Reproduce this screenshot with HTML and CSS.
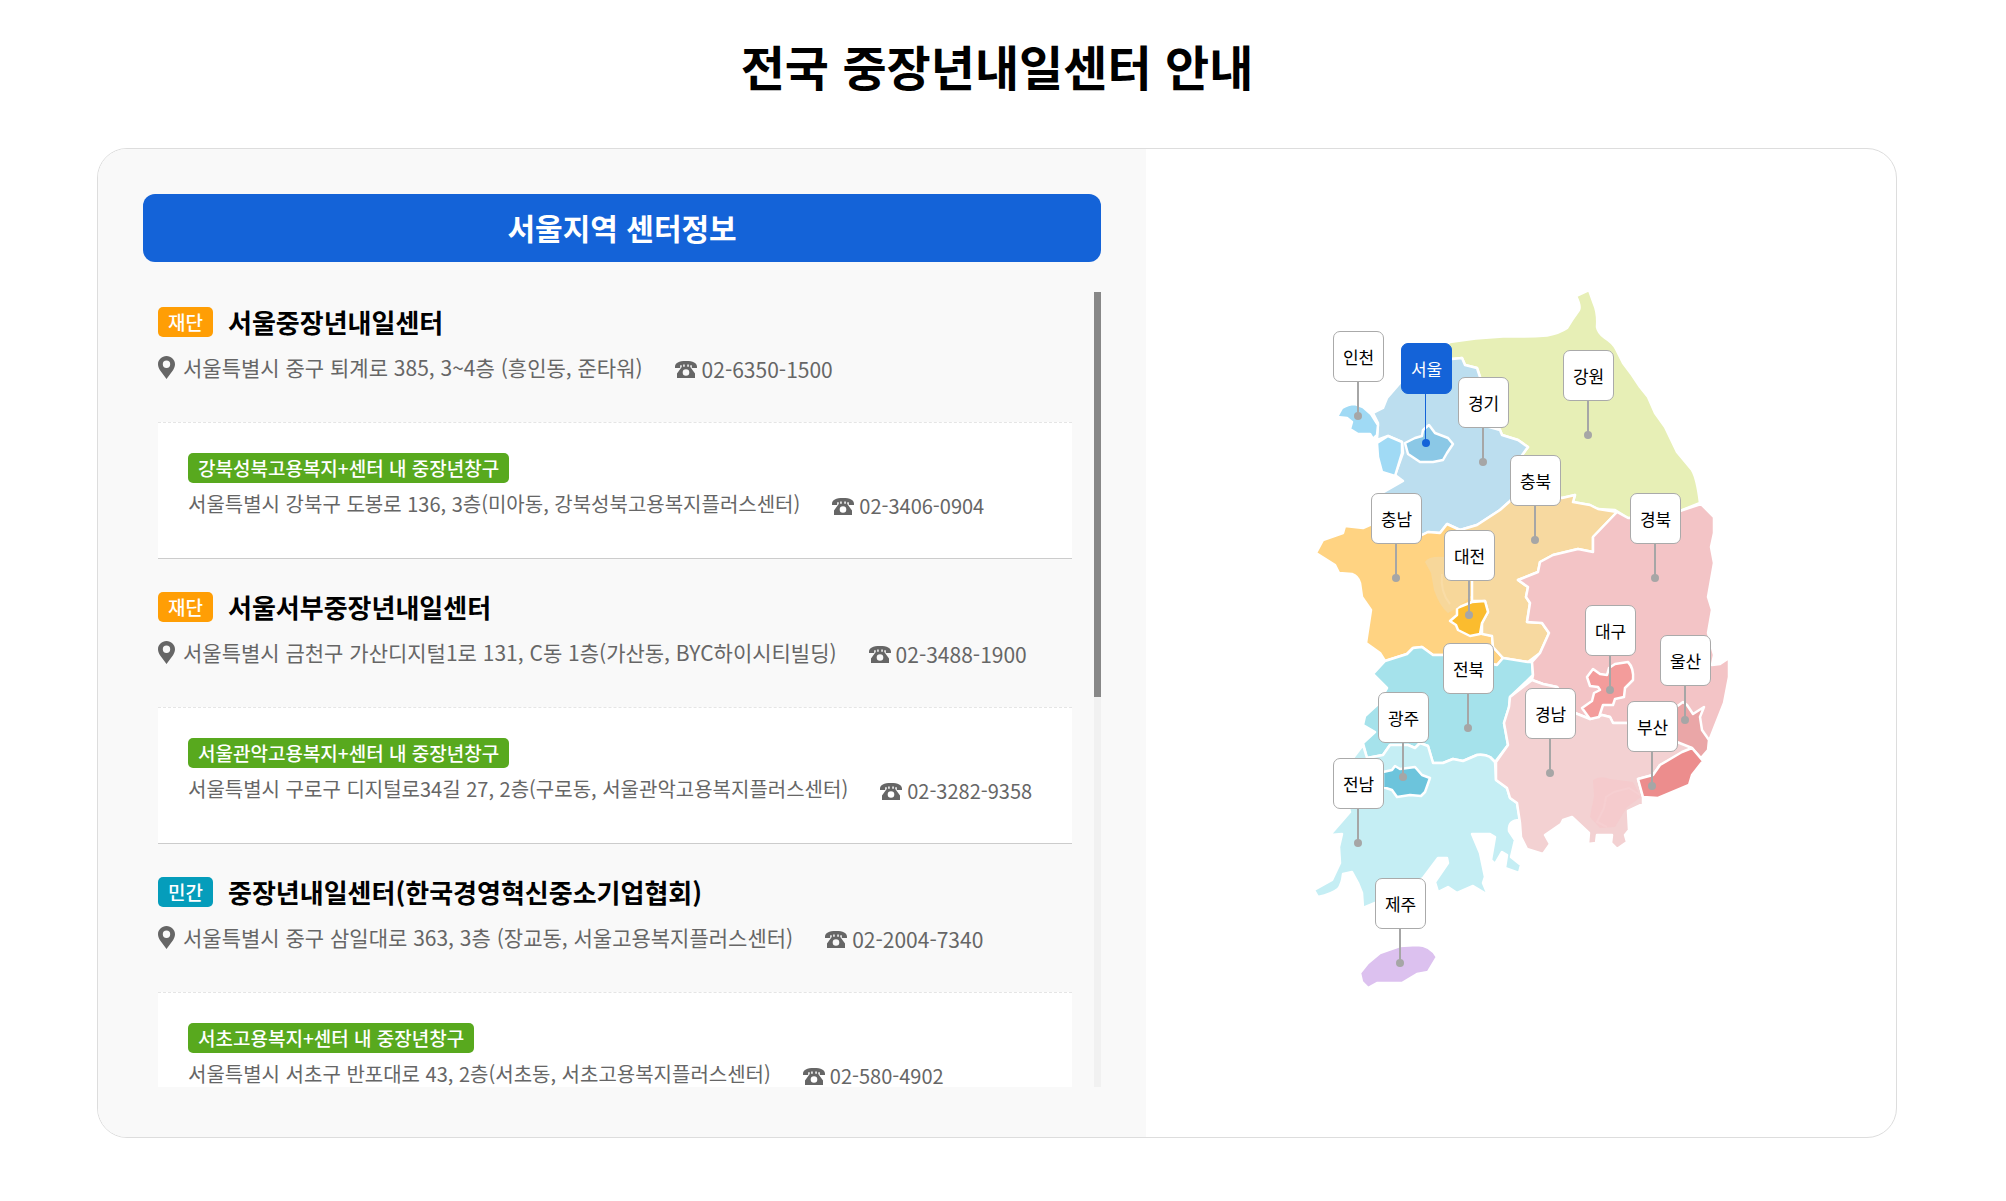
FILE: index.html
```html
<!DOCTYPE html>
<html lang="ko">
<head>
<meta charset="utf-8">
<meta name="viewport" content="width=device-width, initial-scale=1">
<title>전국 중장년내일센터 안내</title>
<link rel="stylesheet" href="styles.css">
</head>
<body>
<svg class="sprite" aria-hidden="true">
  <symbol id="i-pin" viewBox="0 0 17 23"><path fill="currentColor" fill-rule="evenodd" d="M8.500 0C3.800 0 0 3.700 0 8.300c0 2.200.8 4 2 6L8.500 23 15 14.300c1.200-2 2-3.800 2-6C17 3.700 13.200 0 8.500 0zm0 4.500a3.700 3.700 0 1 1 0 7.400 3.700 3.700 0 0 1 0-7.400z"/></symbol>
  <symbol id="i-tel" viewBox="0 0 22 17"><path fill="currentColor" fill-rule="evenodd" d="M0 5.800C0 1.800 4 0 11 0s11 1.800 11 5.800V7h-5.200V4.300h-1.500V6l4.700 6.500V17H2v-4.500L6.700 6V4.300H5.200V7H0zM8.200 3.600v2.200h1.500V3.600zm4.100 0v2.200h1.500V3.600zM11 8.200a3.300 3.300 0 1 0 0 6.600 3.300 3.300 0 0 0 0-6.600z"/></symbol>
</svg>
<main class="page">
  <h1 class="title">전국 중장년내일센터 안내</h1>
  <section class="card">
    <div class="info">
      <h2 class="region">서울지역 센터정보</h2>
      <div class="list-frame">
        <div class="scroller" tabindex="0">
          <ul class="centers">
            <li class="center">
              <div class="head"><span class="tag tag-public">재단</span><h3 class="name">서울중장년내일센터</h3></div>
              <div class="contact"><svg class="pin-icon"><use href="#i-pin"/></svg><span>서울특별시 중구 퇴계로 385, 3~4층 (흥인동, 준타워)</span><span class="tel"><svg class="tel-icon"><use href="#i-tel"/></svg>02-6350-1500</span></div>
              <div class="desk">
                <span class="tag tag-desk">강북성북고용복지+센터 내 중장년창구</span>
                <div class="desk-contact"><span>서울특별시 강북구 도봉로 136, 3층(미아동, 강북성북고용복지플러스센터)</span><span class="tel"><svg class="tel-icon"><use href="#i-tel"/></svg>02-3406-0904</span></div>
              </div>
            </li>
            <li class="center">
              <div class="head"><span class="tag tag-public">재단</span><h3 class="name">서울서부중장년내일센터</h3></div>
              <div class="contact"><svg class="pin-icon"><use href="#i-pin"/></svg><span>서울특별시 금천구 가산디지털1로 131, C동 1층(가산동, BYC하이시티빌딩)</span><span class="tel"><svg class="tel-icon"><use href="#i-tel"/></svg>02-3488-1900</span></div>
              <div class="desk">
                <span class="tag tag-desk">서울관악고용복지+센터 내 중장년창구</span>
                <div class="desk-contact"><span>서울특별시 구로구 디지털로34길 27, 2층(구로동, 서울관악고용복지플러스센터)</span><span class="tel"><svg class="tel-icon"><use href="#i-tel"/></svg>02-3282-9358</span></div>
              </div>
            </li>
            <li class="center">
              <div class="head"><span class="tag tag-private">민간</span><h3 class="name">중장년내일센터(한국경영혁신중소기업협회)</h3></div>
              <div class="contact"><svg class="pin-icon"><use href="#i-pin"/></svg><span>서울특별시 중구 삼일대로 363, 3층 (장교동, 서울고용복지플러스센터)</span><span class="tel"><svg class="tel-icon"><use href="#i-tel"/></svg>02-2004-7340</span></div>
              <div class="desk">
                <span class="tag tag-desk">서초고용복지+센터 내 중장년창구</span>
                <div class="desk-contact"><span>서울특별시 서초구 반포대로 43, 2층(서초동, 서초고용복지플러스센터)</span><span class="tel"><svg class="tel-icon"><use href="#i-tel"/></svg>02-580-4902</span></div>
              </div>
            </li>
          </ul>
        </div>
        <div class="track" aria-hidden="true"><div class="thumb"></div></div>
      </div>
    </div>
    <div class="map-pane">
      <div class="map">
        <svg class="map-art" viewBox="1296 283 450 720" aria-hidden="true">
          <g stroke="#fff" stroke-width="2.500" stroke-linejoin="round">
            <path fill="#e7efb6" d="M1450 342Q1475 338 1503 336.500Q1525 337 1547 335.500Q1560 333 1567 328L1572 320L1579 310Q1581 306 1576 296L1589 290L1594 304Q1598 313 1597 327Q1598 333 1605 338Q1613 343 1616 349L1623 363L1632 375L1640 387L1648 397L1655 413L1665 427L1677 452L1692 470Q1697 478 1700 503L1680 511L1655 518L1628 518L1615 510L1598 509L1590 505L1573 502L1575 495L1562 498L1530 495L1518 460L1528 447L1518 440L1502 435L1500 430L1480 377L1477 368L1465 365L1462 358L1452 359L1440 350z"/>
            <path fill="#bcdeef" d="M1452 359L1462 358L1465 365L1477 368L1480 377L1482 425L1500 430L1502 435L1518 440L1528 447L1520 458L1530 480L1509 502L1500 510L1477 525L1460 530L1447 524L1440 533L1428 532L1422 535L1390 530L1382 493L1403 481L1395 475L1403 453L1402 442L1388 436L1377 440L1378 423L1373 413L1383 408L1387 398L1400 383L1420 355z"/>
            <path fill="#a0daf5" d="M1337 417L1342 408Q1348 404 1355 404L1363 407L1371 414L1378 425L1377 435L1373 439L1370 434L1358 434L1350 429L1352 422L1347 418z"/>
            <path fill="#a0daf5" d="M1377 443L1388 436L1402 442L1402 453L1395 476L1382 472L1378 457z"/>
            <path fill="#8bc8e6" d="M1405 443L1415 438L1422 436L1423 430L1429 425L1435 433L1448 438L1453 444L1447 453L1443 460L1433 462L1420 462L1408 454z"/>
            <path fill="#ffd382" d="M1316 553L1323 540L1343 533L1345 526L1363 528L1372 524L1422 535L1428 532L1440 533L1447 524L1460 530L1474 545L1472 597L1490 612L1485 634L1492 636L1493 647L1503 658L1497 665L1470 660L1443 655L1433 655L1422 647L1413 648L1407 654L1385 661L1380 653L1366 643L1371 610L1362 597L1360 583Q1358 576 1352 574L1339 573L1335 565z"/>
            <path fill="#f7d9a0" d="M1509 502L1520 490L1562 498L1575 495L1573 502L1590 505L1598 509L1617 512L1593 537L1593 552L1578 549L1553 555L1540 562L1538 572L1518 580L1528 587L1526 597L1530 603L1527 622L1542 623L1549 633L1540 653L1528 662L1503 658L1493 647L1492 636L1482 634L1482 623L1488 612L1485 601L1472 601L1472 560L1460 530L1477 525L1500 510z"/>
            <path fill="#fbbc2e" d="M1457 608L1472 602L1485 601L1488 612L1482 623L1480 634L1470 636L1458 630L1456 625L1450 621L1457 615z"/>
            <path fill="#a5e2eb" d="M1385 661L1407 654L1413 648L1422 647L1433 655L1443 655L1497 665L1503 658L1528 662L1532 662L1533 675L1510 697L1509 707L1504 723L1508 745L1495 762L1490 757Q1484 754 1477 755L1463 761L1453 759L1443 763L1433 763L1428 746L1420 743L1415 748L1408 745L1390 745L1383 755L1367 758L1363 743L1375 732L1363 725L1365 716L1377 705L1387 688L1373 674z"/>
            <path fill="#c5eef4" d="M1363 745L1367 758L1383 755L1390 745L1408 745L1415 748L1420 743L1428 746L1433 763L1443 763L1453 759L1463 761L1477 755Q1484 754 1490 757L1495 762L1496 780L1507 788L1510 798L1517 803L1520 820Q1508 820 1509 831L1515 840L1511 857L1521 865L1519 873L1505 868L1507 855L1502 852L1495 864L1491 860L1495 837L1490 834L1472 834L1480 853L1485 877L1483 883L1488 895L1473 886L1457 893L1448 887L1438 892L1435 882L1448 863L1447 858L1438 858L1423 878L1400 890L1375 903L1363 908L1362 893L1358 883L1352 872L1343 874Q1342 884 1338 889Q1332 894 1318 897L1314 890L1332 880L1340 863L1339 847L1342 834L1330 835L1350 812L1340 775z"/>
            <path fill="#6cc4dc" d="M1383 772L1392 770L1395 766L1400 769L1415 767L1422 775L1430 778L1425 792L1421 796L1410 795L1397 797L1392 790L1383 787z"/>
            <path fill="#f3c4c6" d="M1617 512L1628 518L1655 518L1680 511L1701 504L1714 517L1714 533L1711 547L1714 563L1708 597L1712 610L1708 633L1714 655L1712 665L1720 664L1729 658L1729 677L1724 703L1709 741L1680 740L1627 723L1613 723L1610 717L1602 715L1590 719L1575 713L1557 687L1543 684L1532 680L1533 675L1532 662L1540 653L1549 633L1542 623L1527 622L1530 603L1526 597L1528 587L1518 580L1538 572L1540 562L1553 555L1578 549L1593 552L1593 537z"/>
            <path fill="#f3d1d2" d="M1532 680L1543 684L1557 687L1575 713L1590 719L1602 715L1610 717L1613 723L1627 723L1650 728L1677 740L1692 748L1660 765L1653 775L1638 779L1643 797L1643 804L1628 811L1629 830L1625 835L1627 842L1617 849L1611 843L1612 835L1597 835L1596 843L1588 844L1589 833L1572 817L1563 820L1561 824L1545 835L1550 844L1543 854L1527 849L1521 837L1520 823L1517 803L1510 798L1507 788L1496 780L1496 762L1508 745L1504 723L1509 707L1510 697z"/>
            <path fill="#f39c9b" d="M1587 677L1593 669L1600 674L1607 675L1609 668L1615 664L1628 662Q1634 668 1633 680L1625 688L1624 697L1615 699L1613 705L1603 705L1599 717L1590 719L1582 708L1592 701L1594 693L1600 690L1598 687L1590 686z"/>
            <path fill="#eaa6a7" d="M1672 710L1683 702L1687 705L1693 714L1704 707L1700 717L1702 730L1709 740L1708 750L1701 758L1692 748L1672 740z"/>
            <path fill="#ec8d8d" d="M1638 779L1653 775L1660 765L1682 752L1692 748L1703 761L1692 775L1689 785L1658 798L1643 797z"/>
            <path fill="#dcc1ef" d="M1360 973L1368 963L1380 953L1400 946L1417 945Q1430 945 1437 957L1428 972L1417 974L1402 983L1377 983L1368 988L1362 982z"/>
          </g>
          <path fill="#f7d79a" d="M1425 562Q1428 556 1444 557L1471 582L1471 596L1457 608L1448 613Q1440 607 1434 590L1431 573z"/>
          <path fill="none" stroke="#f9dca6" stroke-width="2" d="M1442 574Q1440 592 1450 604"/>
          <path fill="#f5cbcd" d="M1593 780Q1600 775 1610 779L1633 782L1641 797L1627 807L1615 827L1600 828L1590 817L1594 796z"/>
          <path fill="none" stroke="#f6cfd1" stroke-width="2" d="M1640 795L1629 788L1614 792L1606 797L1604 808L1597 822L1607 827"/>
        </svg>
        <button class="marker" style="left:37px;top:48px">인천</button>
        <button class="marker marker-on" style="left:105px;top:60px">서울</button>
        <button class="marker" style="left:162px;top:94px">경기</button>
        <button class="marker" style="left:267px;top:67px">강원</button>
        <button class="marker" style="left:214px;top:172px">충북</button>
        <button class="marker" style="left:75px;top:210px">충남</button>
        <button class="marker" style="left:334px;top:210px">경북</button>
        <button class="marker" style="left:148px;top:247px">대전</button>
        <button class="marker" style="left:289px;top:322px">대구</button>
        <button class="marker" style="left:364px;top:352px">울산</button>
        <button class="marker" style="left:147px;top:360px">전북</button>
        <button class="marker" style="left:82px;top:409px">광주</button>
        <button class="marker" style="left:229px;top:405px">경남</button>
        <button class="marker" style="left:331px;top:418px">부산</button>
        <button class="marker" style="left:37px;top:475px">전남</button>
        <button class="marker" style="left:79px;top:595px">제주</button>
      </div>
    </div>
  </section>
</main>
</body>
</html>
```
FILE: styles.css
```css
* { box-sizing: border-box; }

body {
  margin: 0;
  padding: 32px 12px 32px 0;
  background: #fff;
  color: #000;
  font-family: "Noto Sans CJK KR", "Noto Sans", sans-serif;
}

h1, h2, h3, ul { margin: 0; padding: 0; }
.sprite { display: none; }

.page { width: 92%; max-width: 1800px; margin: 0 auto; }

.title {
  margin-bottom: 50px;
  font-size: 48px;
  font-weight: 700;
  line-height: 66px;
  text-align: center;
}

.card {
  display: flex;
  border: 1px solid #ddd;
  border-radius: 30px;
  overflow: hidden;
}

/* Left: list of centers for the selected region */
.info {
  flex: none;
  width: 58.3%;
  padding: 45px 45px 50px;
  background: #f9f9f9;
}

.region {
  height: 68px;
  margin-bottom: 30px;
  border-radius: 12px;
  background: #1463d8;
  color: #fff;
  font-size: 30px;
  font-weight: 700;
  line-height: 66px;
  text-align: center;
}

.list-frame { display: flex; height: 795px; }
.scroller { flex: 1; min-width: 0; overflow-y: auto; scrollbar-width: none; }
.scroller:focus { outline: none; }
.track { flex: none; width: 7px; background: #f1f1f1; }
.thumb { height: 51%; background: #888; }

.centers { padding: 0 22px 0 15px; list-style: none; }

.center { padding-top: 33px; border-bottom: 1px solid #ccc; }
.center:first-child { padding-top: 15px; }

.head { display: flex; align-items: center; gap: 15px; height: 30px; }

.tag {
  display: inline-block;
  padding: 0 10px;
  border-radius: 5px;
  color: #fff;
  font-size: 19px;
  font-weight: 500;
  line-height: 30px;
  white-space: nowrap;
}
.tag-public { background: #ff9e05; }
.tag-private { background: #059dbb; }
.tag-desk { display: block; width: fit-content; background: #58a91e; }

.name { font-size: 26px; font-weight: 700; line-height: 30px; }

.contact, .desk-contact { display: flex; align-items: center; color: #666; }
.contact { gap: 8px; margin-top: 14px; font-size: 21px; line-height: 32px; }
.desk-contact { margin-top: 6px; font-size: 20px; line-height: 30px; }

.tel {
  display: flex;
  align-items: center;
  gap: 5px;
  margin-left: 24px;
  padding-top: 4px;
  line-height: 24px;
  white-space: nowrap;
}
.desk .tel { margin-left: 32px; }

.pin-icon { flex: none; width: 17px; height: 23px; }
.tel-icon { flex: none; width: 22px; height: 17px; }

.desk {
  margin-top: 39px;
  padding: 30px 30px 39px;
  border-top: 1px dashed #e5e5e5;
  background: #fff;
}

/* Right: map with one marker per region */
.map-pane {
  flex: 1;
  display: flex;
  align-items: center;
  justify-content: center;
}

.map { position: relative; flex: none; width: 450px; height: 720px; }
.map-art { display: block; width: 100%; height: 100%; }

.marker {
  position: absolute;
  width: 51px;
  height: 51px;
  padding: 0;
  border: 1px solid #aaa;
  border-radius: 7px;
  background: #fff;
  color: #000;
  font-family: inherit;
  font-size: 17px;
  cursor: pointer;
}
.marker::before,
.marker::after { content: ""; position: absolute; background: #a6a6a6; }
.marker::before { top: 50px; left: 23px; width: 2px; height: 34px; }
.marker::after { top: 80px; left: 20px; width: 8px; height: 8px; border-radius: 50%; }

.marker-on { border-color: #1463d8; background: #1463d8; color: #fff; }
.marker-on::before,
.marker-on::after { background: #1463d8; }
.marker-on::before { width: 1px; height: 48px; }
.marker-on::after { top: 95px; }
```
